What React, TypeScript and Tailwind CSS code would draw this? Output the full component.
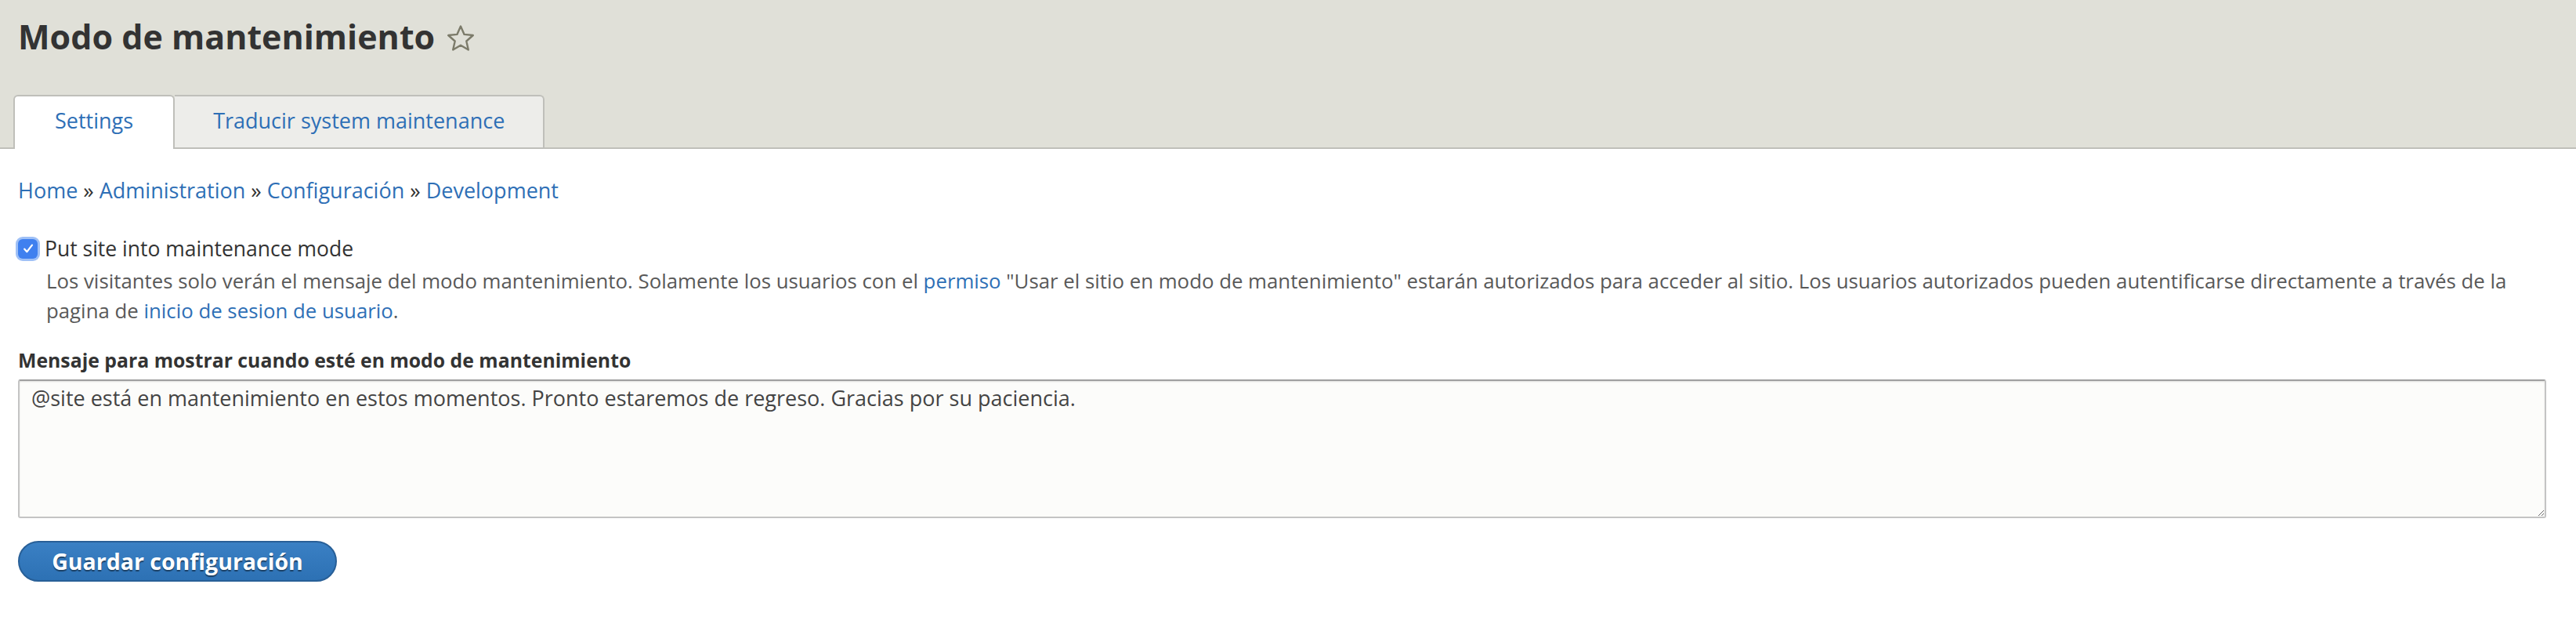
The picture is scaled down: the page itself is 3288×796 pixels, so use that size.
const link = "text-[#2e6fb6]";

const StarIcon = () => (
  <svg width="36" height="36" viewBox="0 0 36 36" fill="none" className="mt-[4px]">
    <path
      d="M18 2.5l4.6 10.4 11.2 1.1-8.5 7.5 2.5 11-9.8-5.8-9.8 5.8 2.5-11-8.5-7.5 11.2-1.1z"
      stroke="#7c7b6a"
      strokeWidth="2.4"
      strokeLinejoin="round"
    />
  </svg>
);

const CheckBox = () => (
  <span className="flex h-[25px] w-[25px] shrink-0 items-center justify-center rounded-[6px] bg-[#3f80ef] ring-[3px] ring-[#9fc0f6]">
    <svg width="18" height="18" viewBox="0 0 16 16" fill="none">
      <path d="M3.8 8.6l2.8 3.1 5.8-7.6" stroke="white" strokeWidth="2" strokeLinecap="round" strokeLinejoin="round" />
    </svg>
  </span>
);

export default function App() {
  return (
    <div className="min-h-screen bg-white font-['Open_Sans',sans-serif] text-[#333]">
      <header className="border-b-2 border-[#bfbfba] bg-[#e0e0d8] px-[17px] pt-[17px]">
        <h1 className="flex items-center gap-[15px] pl-[6px] text-[43px] font-bold leading-[60px] text-[#333]">
          Modo de mantenimiento
          <StarIcon />
        </h1>
        <nav className="-mb-[2px] mt-[44px] flex items-start">
          <a className={`flex h-[69px] items-center rounded-t-[6px] border-2 border-b-0 border-[#bfbfba] bg-white px-[51px] pb-[4px] text-[27px] ${link}`}>
            Settings
          </a>
          <a className={`flex h-[67px] items-center rounded-tr-[6px] border-2 border-b-0 border-l-0 border-[#bfbfba] bg-[#ededea] px-[49px] pb-[2px] text-[27px] ${link}`}>
            Traducir system maintenance
          </a>
        </nav>
      </header>

      <main className="pl-[23px] pr-[38px]">
        <div className="pt-[35px] text-[27px] leading-[36px]">
          <a className={link}>Home</a> » <a className={link}>Administration</a> »{" "}
          <a className={link}>Configuración</a> » <a className={link}>Development</a>
        </div>

        <div className="mt-[38px]">
          <label className="flex items-center gap-[9px] text-[26.5px] leading-[36px]">
            <CheckBox />
            Put site into maintenance mode
          </label>
          <p className="mt-[5px] pl-[36px] text-[25.8px] leading-[37.5px] text-[#595959]">
            Los visitantes solo verán el mensaje del modo mantenimiento. Solamente los usuarios con el{" "}
            <a className={link}>permiso</a> "Usar el sitio en modo de mantenimiento" estarán autorizados para acceder
            al sitio. Los usuarios autorizados pueden autentificarse directamente a través de la pagina de{" "}
            <a className={link}>inicio de sesion de usuario</a>.
          </p>
        </div>

        <div className="mt-[26px]">
          <label className="block text-[24.8px] font-bold leading-[36px]">
            Mensaje para mostrar cuando esté en modo de mantenimiento
          </label>
          <textarea
            className="mt-[7px] block h-[177px] w-full rounded-[3px] border-2 border-[#c4c4c4] border-t-[#a0a0a0] bg-[#fcfcfa] px-[15px] py-[4px] text-[27px] leading-[36px] text-[#444] shadow-[inset_0_1px_2px_rgba(0,0,0,0.12)] outline-none"
            defaultValue="@site está en mantenimiento en estos momentos. Pronto estaremos de regreso. Gracias por su paciencia."
          />
        </div>

        <button className="mt-[29px] flex h-[52px] w-[407px] items-center justify-center rounded-full border-2 border-[#285f97] bg-gradient-to-b from-[#3a80c4] to-[#2d71b4] text-[28.5px] font-bold text-white [text-shadow:0_2px_1px_rgba(0,0,0,0.45)]">
          Guardar configuración
        </button>
      </main>
    </div>
  );
}
